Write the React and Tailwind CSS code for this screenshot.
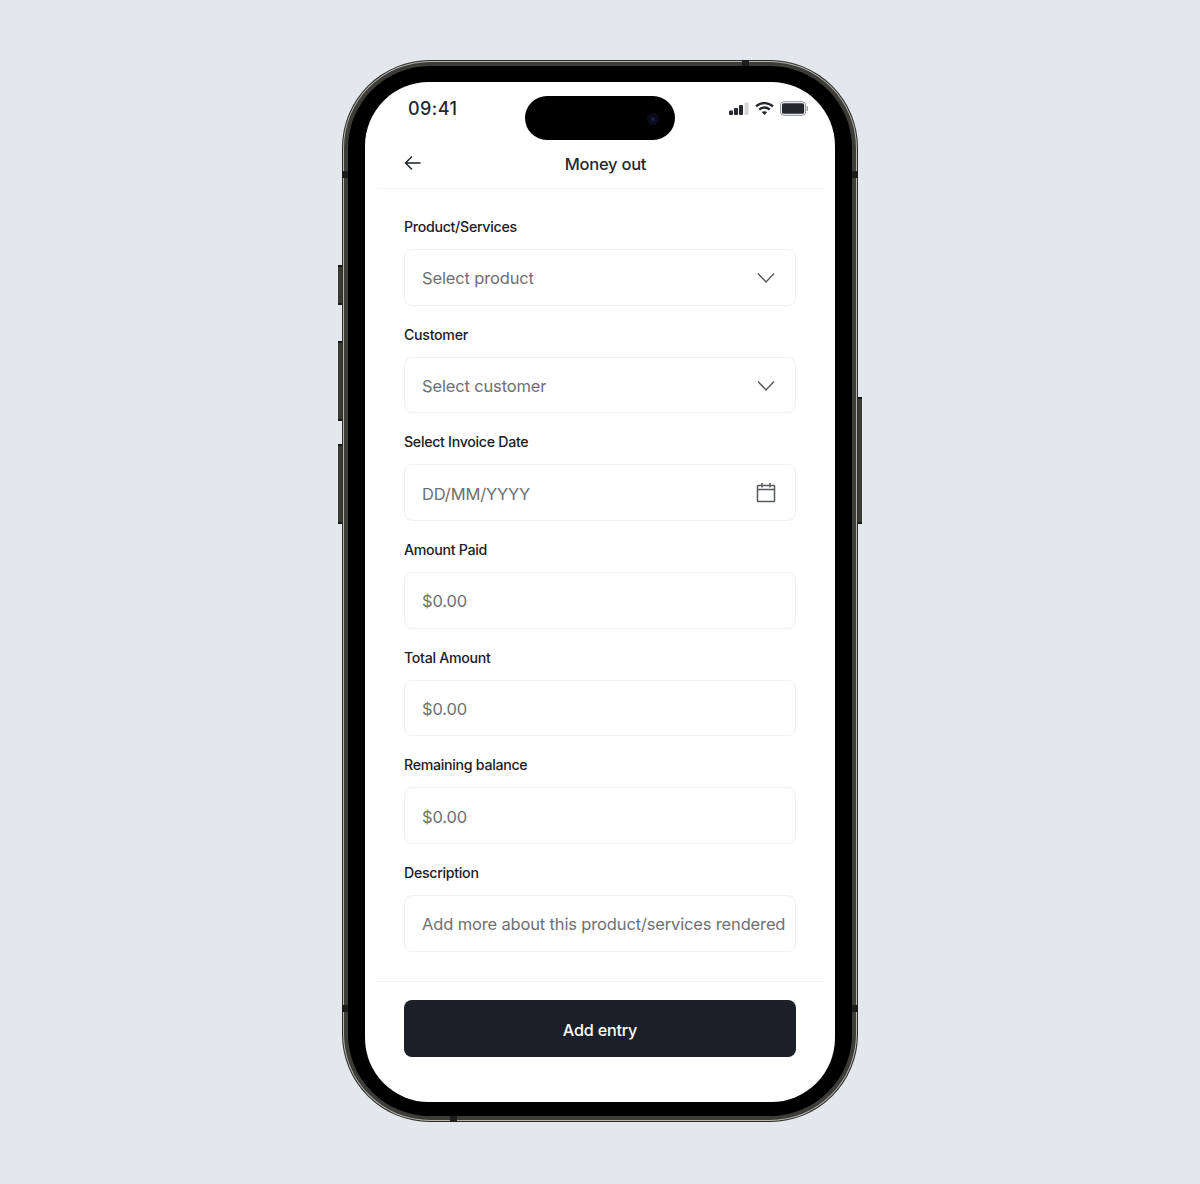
import React from 'react';

const Chevron = () => (
    <svg width="20" height="12" viewBox="0 0 20 12" fill="none" className="shrink-0 mt-[2px]">
        <path d="M2 1.5l8 8.5 8-8.5" stroke="#55585c" strokeWidth="1.4" />
    </svg>
);

const CalendarIcon = () => (
    <svg width="20" height="21" viewBox="0 0 20 21" fill="none" className="shrink-0 -mt-[1px]">
        <rect x="1.5" y="3.5" width="17" height="16" stroke="#55585c" strokeWidth="1.5" rx="0.5" />
        <path d="M1.5 7.5h17M6 1v4.5M14 1v4.5" stroke="#55585c" strokeWidth="1.5" />
    </svg>
);

const Field = ({ label, placeholder, icon }) => (
    <div className="flex flex-col">
        <label className="h-5 mb-3 text-[14.2px] leading-5 font-medium tracking-[-0.3px] text-[#1b2028]">{label}</label>
        <div className="h-[56.67px] flex items-center justify-between pl-[17px] pr-[19px] rounded-lg border border-[#eff0f2] bg-white">
            <span className="text-[16.5px] tracking-[-0.15px] whitespace-nowrap text-[#6e7073] mt-[3px]">{placeholder}</span>
            {icon}
        </div>
    </div>
);

const SideButton = ({ className }) => (
    <div className={`absolute w-[5px] bg-[#3a3934] border-y-2 border-[#1a1a18] ${className}`} />
);

export default function App() {
    return (
        <div className="w-full min-h-[1184px] bg-[#e4e7eb] flex items-start justify-center pt-[60px] font-['Inter','Liberation_Sans',sans-serif]">
            <div className="relative">
                {/* hardware buttons */}
                <SideButton className="-left-[4px] top-[205px] h-[40px]" />
                <SideButton className="-left-[4px] top-[281px] h-[80px]" />
                <SideButton className="-left-[4px] top-[384px] h-[80px]" />
                <SideButton className="-right-[4px] top-[337px] h-[127px]" />

                <div className="relative z-10 rounded-[88px] bg-[#2a2a28] p-px">
                    <div className="rounded-[87px] bg-[#b5b4ae] p-px">
                        <div className="rounded-[86px] bg-[#3d3c38] p-[4px]">
                            <div className="rounded-[82px] bg-black pt-[16px] pb-[14px] px-[17px]">
                                <div className="w-[470px] h-[1020px] rounded-[64px] bg-white overflow-hidden flex flex-col">
                                    {/* status bar */}
                                    <div className="grid grid-cols-[1fr_150px_1fr] pt-[14px]">
                                        <div className="pl-[43px] h-[24px] flex items-center text-[18px] font-medium tracking-[0.45px] text-[#24282e]">09:41</div>
                                        <div className="h-[44px] rounded-full bg-black flex items-center justify-end pr-[16px]">
                                            <div className="w-[12px] h-[12px] mt-[1px] rounded-full bg-[#0a0c1c] flex items-center justify-center">
                                                <div className="w-[4px] h-[4px] rounded-full bg-[#1a2050]" />
                                            </div>
                                        </div>
                                        <div className="h-[25px] flex items-center justify-end gap-[6px] pr-[26px]">
                                            <svg width="20" height="14" viewBox="0 0 20 14">
                                                <rect x="0" y="8.5" width="4" height="4.5" rx="1" fill="#24282e" />
                                                <rect x="5" y="6" width="4" height="7" rx="1" fill="#24282e" />
                                                <rect x="10" y="3" width="4" height="10" rx="1" fill="#24282e" />
                                                <rect x="15.5" y="0.5" width="4" height="12.5" rx="1" fill="#d5d6d8" />
                                            </svg>
                                            <svg width="19" height="15" viewBox="0 0 18 14" fill="none">
                                                <path d="M1 5c4.6-4.2 11.4-4.2 16 0" stroke="#24282e" strokeWidth="2.2" />
                                                <path d="M4 8c2.9-2.6 7.1-2.6 10 0" stroke="#24282e" strokeWidth="2.2" />
                                                <path d="M6.4 10.4L9 13.2l2.6-2.8c-1.5-1.1-3.7-1.1-5.2 0z" fill="#24282e" />
                                            </svg>
                                            <svg width="29" height="15" viewBox="0 0 30 15" fill="none">
                                                <rect x="0.5" y="0.5" width="26" height="14" rx="3.5" stroke="#8a8c90" />
                                                <rect x="2" y="2" width="23" height="11" rx="2" fill="#24282e" />
                                                <rect x="27.5" y="5" width="1.5" height="5" rx="0.7" fill="#a0a2a5" />
                                            </svg>
                                        </div>
                                    </div>

                                    {/* header */}
                                    <div className="h-[49px] ml-3 mr-[10px] pl-[27px] pr-[36px] flex items-center border-b border-[#f1f2f3]">
                                        <svg width="18" height="16" viewBox="0 0 18 16" fill="none" className="shrink-0 -mt-[3px]">
                                            <path d="M16.5 8H1.5M8 1.5L1.5 8 8 14.5" stroke="#1b2028" strokeWidth="1.4" />
                                        </svg>
                                        <div className="flex-1 text-center text-[16.5px] font-medium tracking-[-0.25px] text-[#24282e]">Money out</div>
                                    </div>

                                    {/* form */}
                                    <div className="px-[39px] pt-[28px] pb-[29px] flex flex-col gap-[19px]">
                                        <Field label="Product/Services" placeholder="Select product" icon={<Chevron />} />
                                        <Field label="Customer" placeholder="Select customer" icon={<Chevron />} />
                                        <Field label="Select Invoice Date" placeholder="DD/MM/YYYY" icon={<CalendarIcon />} />
                                        <Field label="Amount Paid" placeholder="$0.00" />
                                        <Field label="Total Amount" placeholder="$0.00" />
                                        <Field label="Remaining balance" placeholder="$0.00" />
                                        <Field label="Description" placeholder="Add more about this product/services rendered" />
                                    </div>

                                    {/* footer */}
                                    <div className="ml-3 mr-[10px] pl-[27px] pr-[29px] pt-[18px] border-t border-[#f1f2f3]">
                                        <button className="w-full h-[57px] rounded-lg bg-[#1b2028] text-white text-[16.2px] font-medium tracking-[-0.2px] pt-[4px]">Add entry</button>
                                    </div>
                                </div>
                            </div>
                        </div>
                    </div>
                </div>

                {/* antenna bands on the frame */}
                <div className="absolute z-20 top-0 left-[400px] w-[7px] h-[6px] bg-[#1c1c1a]" />
                <div className="absolute z-20 bottom-0 left-[108px] w-[7px] h-[6px] bg-[#1c1c1a]" />
                <div className="absolute z-20 left-0 top-[111px] w-[6px] h-[7px] bg-[#1c1c1a]" />
                <div className="absolute z-20 right-0 top-[111px] w-[6px] h-[7px] bg-[#1c1c1a]" />
                <div className="absolute z-20 left-0 top-[945px] w-[6px] h-[7px] bg-[#1c1c1a]" />
                <div className="absolute z-20 right-0 top-[945px] w-[6px] h-[7px] bg-[#1c1c1a]" />
            </div>
        </div>
    );
}
